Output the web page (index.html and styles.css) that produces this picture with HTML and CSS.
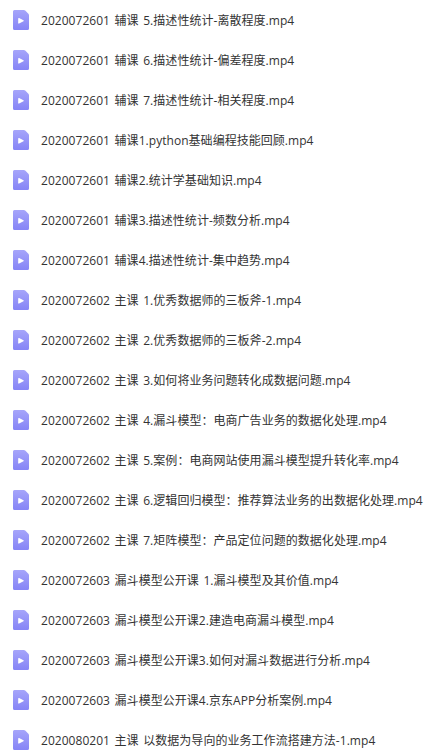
FILE: index.html
```html
<!DOCTYPE html>
<html lang="zh-CN">
<head>
  <meta charset="UTF-8">
  <meta name="viewport" content="width=device-width, initial-scale=1.0">
  <title>课程视频</title>
  <link rel="stylesheet" href="styles.css">
</head>
<body>
  <!-- 视频文件图标 -->
  <svg class="defs" width="0" height="0">
    <linearGradient id="file-bg" x1="0" y1="0" x2="0" y2="1">
      <stop offset="0" stop-color="#a6a5fa"/>
      <stop offset="1" stop-color="#8684f6"/>
    </linearGradient>
    <symbol id="video" viewBox="0 0 16 20">
      <path d="M1.5 0H10.8Q11.6 0 12.2 0.6L15.4 3.8Q16 4.4 16 5.2V18.5A1.5 1.5 0 0 1 14.5 20H1.5A1.5 1.5 0 0 1 0 18.5V1.5A1.5 1.5 0 0 1 1.5 0Z" fill="url(#file-bg)"/>
      <path d="M5.8 8.5L10.2 10.8L5.8 13.1Z" fill="#fff" stroke="#fff" stroke-width="1.1" stroke-linejoin="round"/>
    </symbol>
  </svg>

  <ul class="file-list">
    <li class="file"><svg class="icon"><use href="#video"/></svg><span class="name">2020072601 辅课 5.描述性统计-离散程度.mp4</span></li>
    <li class="file"><svg class="icon"><use href="#video"/></svg><span class="name">2020072601 辅课 6.描述性统计-偏差程度.mp4</span></li>
    <li class="file"><svg class="icon"><use href="#video"/></svg><span class="name">2020072601 辅课 7.描述性统计-相关程度.mp4</span></li>
    <li class="file"><svg class="icon"><use href="#video"/></svg><span class="name">2020072601 辅课1.python基础编程技能回顾.mp4</span></li>
    <li class="file"><svg class="icon"><use href="#video"/></svg><span class="name">2020072601 辅课2.统计学基础知识.mp4</span></li>
    <li class="file"><svg class="icon"><use href="#video"/></svg><span class="name">2020072601 辅课3.描述性统计-频数分析.mp4</span></li>
    <li class="file"><svg class="icon"><use href="#video"/></svg><span class="name">2020072601 辅课4.描述性统计-集中趋势.mp4</span></li>
    <li class="file"><svg class="icon"><use href="#video"/></svg><span class="name">2020072602 主课 1.优秀数据师的三板斧-1.mp4</span></li>
    <li class="file"><svg class="icon"><use href="#video"/></svg><span class="name">2020072602 主课 2.优秀数据师的三板斧-2.mp4</span></li>
    <li class="file"><svg class="icon"><use href="#video"/></svg><span class="name">2020072602 主课 3.如何将业务问题转化成数据问题.mp4</span></li>
    <li class="file"><svg class="icon"><use href="#video"/></svg><span class="name">2020072602 主课 4.漏斗模型：电商广告业务的数据化处理.mp4</span></li>
    <li class="file"><svg class="icon"><use href="#video"/></svg><span class="name">2020072602 主课 5.案例：电商网站使用漏斗模型提升转化率.mp4</span></li>
    <li class="file"><svg class="icon"><use href="#video"/></svg><span class="name">2020072602 主课 6.逻辑回归模型：推荐算法业务的出数据化处理.mp4</span></li>
    <li class="file"><svg class="icon"><use href="#video"/></svg><span class="name">2020072602 主课 7.矩阵模型：产品定位问题的数据化处理.mp4</span></li>
    <li class="file"><svg class="icon"><use href="#video"/></svg><span class="name">2020072603 漏斗模型公开课 1.漏斗模型及其价值.mp4</span></li>
    <li class="file"><svg class="icon"><use href="#video"/></svg><span class="name">2020072603 漏斗模型公开课2.建造电商漏斗模型.mp4</span></li>
    <li class="file"><svg class="icon"><use href="#video"/></svg><span class="name">2020072603 漏斗模型公开课3.如何对漏斗数据进行分析.mp4</span></li>
    <li class="file"><svg class="icon"><use href="#video"/></svg><span class="name">2020072603 漏斗模型公开课4.京东APP分析案例.mp4</span></li>
    <li class="file"><svg class="icon"><use href="#video"/></svg><span class="name">2020080201 主课 以数据为导向的业务工作流搭建方法-1.mp4</span></li>
  </ul>
</body>
</html>
```

FILE: styles.css
```css
body {
  margin: 0;
  height: 755px;
  overflow: hidden;
  background: #fff;
  color: #333;
  font-family: "Open Sans", "Noto Sans CJK SC", sans-serif;
  font-size: 12px;
}

.defs {
  display: block;
}

.file-list {
  list-style: none;
  margin: 0;
  padding: 0;
}

.file {
  display: flex;
  align-items: center;
  gap: 12px;
  height: 40px;
  padding-left: 13px;
}

.icon {
  flex: none;
  width: 16px;
  height: 20px;
}

.name {
  padding-top: 2px;
  line-height: 20px;
  white-space: nowrap;
  letter-spacing: 0.04px;
  word-spacing: 1.4px;
}
```
